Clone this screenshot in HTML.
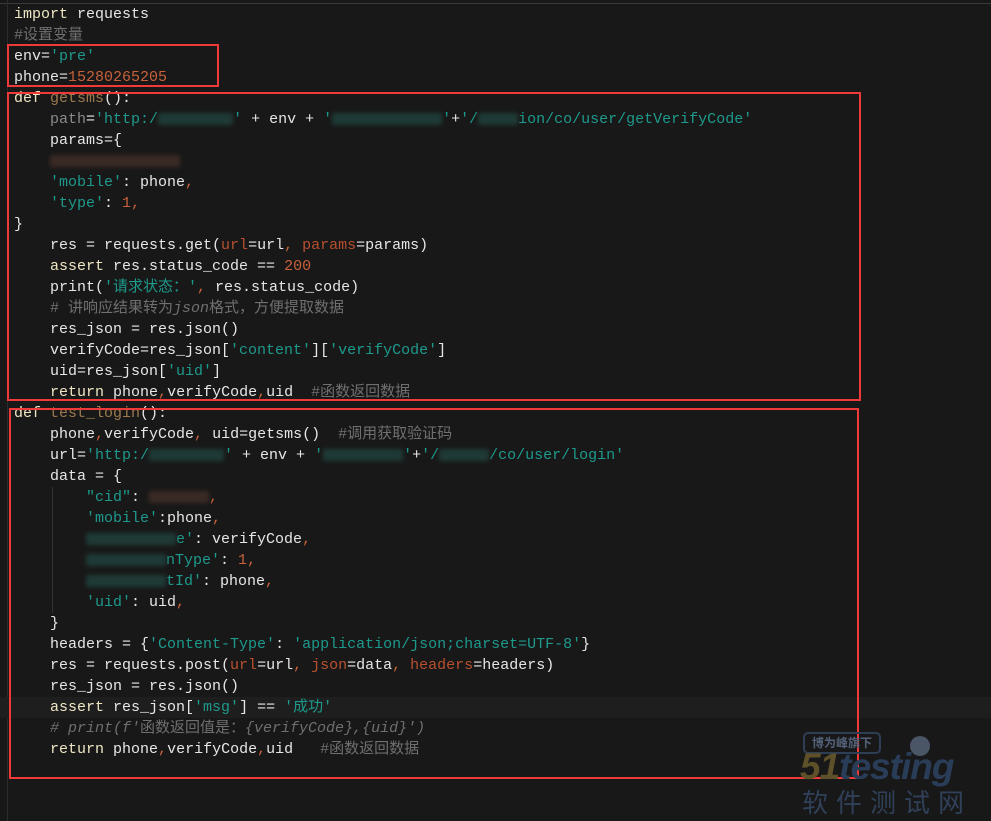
<!DOCTYPE html>
<html><head><meta charset="utf-8"><style>
body{margin:0;width:991px;height:821px;background:#181818;overflow:hidden;position:relative;font-family:"Liberation Mono","Noto Sans CJK SC",monospace;font-size:15px;color:#e6e6e6}
.l{position:absolute;left:14px;height:21px;line-height:21px;white-space:pre}
.k{color:#efe6c4}.s{color:#1d9a8c}.n{color:#c8613a}.c{color:#6f6f6f}.f{color:#9c7a4e}.a{color:#b8502f}.p{color:#c8613a}.d{color:#8a8a8a}
.box{position:absolute;border:2px solid #f03a3a}
.blur{display:inline-block;background:#1f3a36;filter:blur(2px);height:12px;vertical-align:middle}
.cur{position:absolute;left:0;top:697px;width:991px;height:21px;background:#1e1e1e}
</style></head><body>
<div style="position:absolute;left:0;top:3px;width:991px;height:1px;background:#3a3a3a"></div>
<div style="position:absolute;left:7px;top:0;width:1px;height:821px;background:#2c2c2c"></div>
<div class="cur"></div>
<div class="l" style="top:4px"><span class="k">import</span> requests</div>
<div class="l" style="top:25px"><span class="c">#设置变量</span></div>
<div class="l" style="top:46px">env=<span class="s">'pre'</span></div>
<div class="l" style="top:67px">phone=<span class="n">15280265205</span></div>
<div class="l" style="top:88px"><span class="k">def</span> <span class="f">getsms</span>():</div>
<div class="l" style="top:109px">    <span class="d">path</span>=<span class="s">'http:/<span class="blur" style="width:75px"></span>'</span> + env + <span class="s">'<span class="blur" style="width:110px"></span>'</span>+<span class="s">'/<span class="blur" style="width:40px"></span>ion/co/user/getVerifyCode'</span></div>
<div class="l" style="top:130px">    params={</div>
<div class="l" style="top:151px">    <span class="blur" style="width:130px;background:#3a2a24"></span></div>
<div class="l" style="top:172px">    <span class="s">'mobile'</span>: phone<span class="p">,</span></div>
<div class="l" style="top:193px">    <span class="s">'type'</span>: <span class="n">1</span><span class="p">,</span></div>
<div class="l" style="top:214px">}</div>
<div class="l" style="top:235px">    res = requests.get(<span class="a">url</span>=url<span class="p">,</span> <span class="a">params</span>=params)</div>
<div class="l" style="top:256px">    <span class="k">assert</span> res.status_code == <span class="n">200</span></div>
<div class="l" style="top:277px">    print(<span class="s">'请求状态：'</span><span class="p">,</span> res.status_code)</div>
<div class="l" style="top:298px">    <span class="c"># 讲响应结果转为<i>json</i>格式，方便提取数据</span></div>
<div class="l" style="top:319px">    res_json = res.json()</div>
<div class="l" style="top:340px">    verifyCode=res_json[<span class="s">'content'</span>][<span class="s">'verifyCode'</span>]</div>
<div class="l" style="top:361px">    uid=res_json[<span class="s">'uid'</span>]</div>
<div class="l" style="top:382px">    <span class="k">return</span> phone<span class="p">,</span>verifyCode<span class="p">,</span>uid  <span class="c">#函数返回数据</span></div>
<div class="l" style="top:403px"><span class="k">def</span> <span class="f">test_login</span>():</div>
<div class="l" style="top:424px">    phone<span class="p">,</span>verifyCode<span class="p">,</span> uid=getsms()  <span class="c">#调用获取验证码</span></div>
<div class="l" style="top:445px">    url=<span class="s">'http:/<span class="blur" style="width:75px"></span>'</span> + env + <span class="s">'<span class="blur" style="width:80px"></span>'</span>+<span class="s">'/<span class="blur" style="width:50px"></span>/co/user/login'</span></div>
<div class="l" style="top:466px">    data = {</div>
<div class="l" style="top:487px">        <span class="s">"cid"</span>: <span class="blur" style="width:60px;background:#3a2a24"></span><span class="p">,</span></div>
<div class="l" style="top:508px">        <span class="s">'mobile'</span>:phone<span class="p">,</span></div>
<div class="l" style="top:529px">        <span class="blur" style="width:90px"></span><span class="s">e'</span>: verifyCode<span class="p">,</span></div>
<div class="l" style="top:550px">        <span class="blur" style="width:80px"></span><span class="s">nType'</span>: <span class="n">1</span><span class="p">,</span></div>
<div class="l" style="top:571px">        <span class="blur" style="width:80px"></span><span class="s">tId'</span>: phone<span class="p">,</span></div>
<div class="l" style="top:592px">        <span class="s">'uid'</span>: uid<span class="p">,</span></div>
<div class="l" style="top:613px">    }</div>
<div class="l" style="top:634px">    headers = {<span class="s">'Content-Type'</span>: <span class="s">'application/json;charset=UTF-8'</span>}</div>
<div class="l" style="top:655px">    res = requests.post(<span class="a">url</span>=url<span class="p">,</span> <span class="a">json</span>=data<span class="p">,</span> <span class="a">headers</span>=headers)</div>
<div class="l" style="top:676px">    res_json = res.json()</div>
<div class="l" style="top:697px">    <span class="k">assert</span> res_json[<span class="s">'msg'</span>] == <span class="s">'成功'</span></div>
<div class="l" style="top:718px">    <span class="c"><i># print(f'</i>函数返回值是：<i>{verifyCode},{uid}')</i></span></div>
<div class="l" style="top:739px">    <span class="k">return</span> phone<span class="p">,</span>verifyCode<span class="p">,</span>uid   <span class="c">#函数返回数据</span></div>
<div style="position:absolute;left:52px;top:487px;width:1px;height:126px;background:#333"></div>
<div class="box" style="left:7px;top:44px;width:208px;height:39px"></div>
<div class="box" style="left:7px;top:92px;width:850px;height:305px"></div>
<div class="box" style="left:9px;top:408px;width:846px;height:367px"></div>
<div style="position:absolute;left:803px;top:732px;width:74px;height:18px;border:2px solid #2d3e55;border-radius:5px;color:#53627a;font-size:12px;line-height:18px;text-align:center;font-family:'Noto Sans CJK SC',sans-serif;font-weight:bold">博为峰旗下</div>
<div style="position:absolute;left:800px;top:746px;font-family:'Liberation Sans',sans-serif;font-weight:bold;font-style:italic;font-size:37px;color:#2a3d58;letter-spacing:-1px"><span style="color:#5e5028">51</span>testing</div>
<div style="position:absolute;left:910px;top:736px;width:20px;height:20px;border-radius:50%;background:#4a5566"></div>
<div style="position:absolute;left:802px;top:788px;font-family:'Noto Sans CJK SC',sans-serif;font-size:26px;color:#2f4058;letter-spacing:8px;line-height:28px">软件测试网</div>
</body></html>
